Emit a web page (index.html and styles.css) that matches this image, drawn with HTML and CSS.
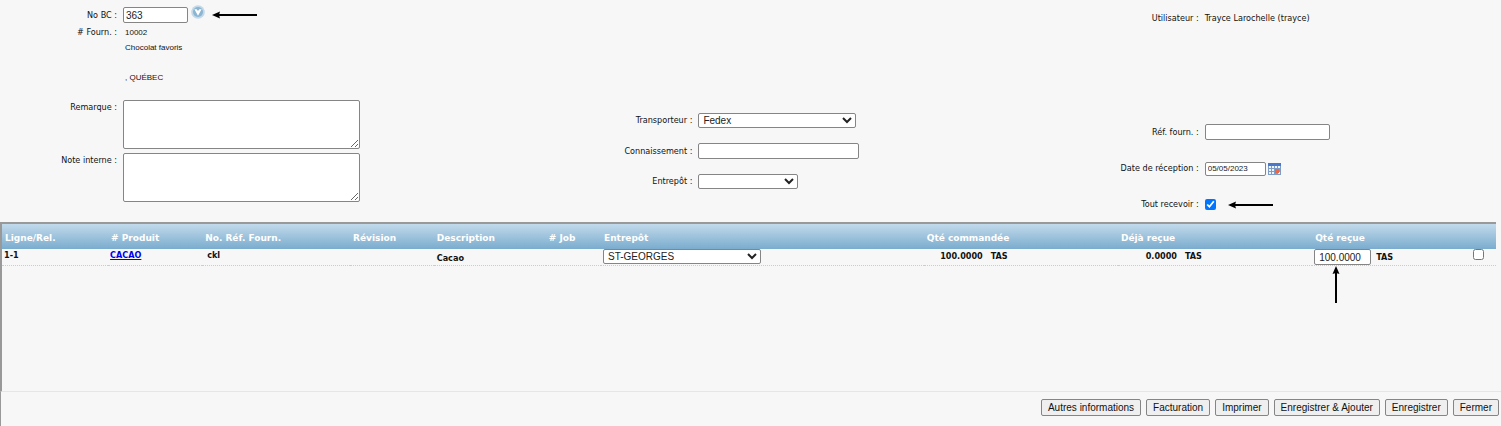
FILE: index.html
```html
<!DOCTYPE html>
<html lang="fr">
<head>
    <meta charset="UTF-8">
    <meta name="viewport" content="width=device-width, initial-scale=1.0">
    <title>Réception</title>
    <link rel="stylesheet" href="styles.css">
</head>
<body>
    <form class="page">
        <div class="entete">
            <div class="groupe groupe-gauche">
                <label for="nobc">No BC :</label>
                <div class="champ">
                    <input type="text" id="nobc" class="w-bc" value="363">
                    <button type="button" class="btn-icone btn-rond" aria-label="Choisir le BC">
                        <svg width="14" height="14" viewBox="0 0 14 14">
                            <circle cx="7" cy="7" r="6.8" fill="#c3d9e8"/>
                            <circle cx="7" cy="7" r="5" fill="#8ab6d3"/>
                            <path d="M3.4 4.2 L5.6 4.2 L7 6 L8.4 4.2 L10.6 4.2 L7 10.8 Z" fill="#fff"/>
                        </svg>
                    </button>
                    <svg class="fleche" width="46" height="8" viewBox="0 0 46 8">
                        <path d="M0 4 L8 0.5 L7 4 L8 7.5 Z"/>
                        <path d="M5 3 H45 V5 H5 Z"/>
                    </svg>
                </div>
                <span class="etiquette"># Fourn. :</span>
                <div class="adresse">
                    <p>10002</p>
                    <p>Chocolat favoris</p>
                    <p></p>
                    <p>, QUÉBEC</p>
                </div>
                <label for="remarque" class="haut">Remarque :</label>
                <textarea id="remarque"></textarea>
                <label for="note" class="haut">Note interne :</label>
                <textarea id="note"></textarea>
            </div>

            <div class="groupe groupe-centre">
                <label for="transporteur">Transporteur :</label>
                <select id="transporteur" class="w-liste"><option>Fedex</option></select>
                <label for="connaissement">Connaissement :</label>
                <input type="text" id="connaissement" class="w-conn">
                <label for="entrepot">Entrepôt :</label>
                <select id="entrepot" class="w-entrepot"><option></option></select>
            </div>

            <div class="groupe groupe-droite">
                <span class="etiquette utilisateur">Utilisateur :</span>
                <span class="utilisateur">Trayce Larochelle (trayce)</span>
                <label for="ref">Réf. fourn. :</label>
                <input type="text" id="ref" class="w-ref">
                <label for="date">Date de réception :</label>
                <div class="champ champ-date">
                    <input type="text" id="date" class="w-date" value="05/05/2023">
                    <button type="button" class="btn-icone" aria-label="Calendrier">
                        <svg width="13" height="12" viewBox="0 0 13 12">
                            <rect width="13" height="12" fill="#7d9cc8"/>
                            <rect width="13" height="3" fill="#4a78c8"/>
                            <path d="M1 3h2v2H1zM4 3h2v2H4zM7 3h2v2H7zM10 3h2v2h-2zM1 6h2v2H1zM4 6h2v2H4zM1 9h2v2H1zM4 9h2v2H4zM10 9h2v2h-2z" fill="#eef4fc"/>
                            <rect x="7" y="6" width="4" height="4" fill="#e8694a"/>
                        </svg>
                    </button>
                </div>
                <label for="tout">Tout recevoir :</label>
                <div class="champ champ-tout">
                    <input type="checkbox" id="tout" checked>
                    <svg class="fleche" width="46" height="8" viewBox="0 0 46 8">
                        <path d="M0 4 L8 0.5 L7 4 L8 7.5 Z"/>
                        <path d="M5 3 H45 V5 H5 Z"/>
                    </svg>
                </div>
            </div>
        </div>

        <div class="liste">
            <table>
                <colgroup>
                    <col class="c-ligne"><col class="c-produit"><col class="c-ref"><col class="c-rev">
                    <col class="c-desc"><col class="c-job"><col class="c-entrepot"><col class="c-qte">
                    <col class="c-qte"><col class="c-recue"><col>
                </colgroup>
                <thead>
                    <tr>
                        <th>Ligne/Rel.</th>
                        <th># Produit</th>
                        <th>No. Réf. Fourn.</th>
                        <th>Révision</th>
                        <th>Description</th>
                        <th># Job</th>
                        <th>Entrepôt</th>
                        <th>Qté commandée</th>
                        <th>Déjà reçue</th>
                        <th>Qté reçue</th>
                        <th></th>
                    </tr>
                </thead>
                <tbody>
                    <tr>
                        <td>1-1</td>
                        <td><a href="#">CACAO</a></td>
                        <td class="ref">ckl</td>
                        <td></td>
                        <td class="desc">Cacao</td>
                        <td></td>
                        <td><select class="w-liste" aria-label="Entrepôt"><option>ST-GEORGES</option></select></td>
                        <td><div class="qte"><span>100.0000</span><span>TAS</span></div></td>
                        <td><div class="qte"><span>0.0000</span><span>TAS</span></div></td>
                        <td>
                            <div class="recue">
                                <input type="text" class="w-qte" value="100.0000" aria-label="Qté reçue">
                                <span>TAS</span>
                                <svg class="fleche fleche-haut" width="8" height="38" viewBox="0 0 8 38">
                                    <path d="M4 0 L7.5 8 L4 7 L0.5 8 Z"/>
                                    <path d="M3 5 V37 H5 V5 Z"/>
                                </svg>
                            </div>
                        </td>
                        <td><input type="checkbox" aria-label="Choisir la ligne"></td>
                    </tr>
                </tbody>
            </table>
        </div>

        <div class="boutons">
            <button type="button">Autres informations</button>
            <button type="button">Facturation</button>
            <button type="button">Imprimer</button>
            <button type="button">Enregistrer &amp; Ajouter</button>
            <button type="button">Enregistrer</button>
            <button type="button">Fermer</button>
        </div>
    </form>
</body>
</html>
```
FILE: styles.css
```css
* { box-sizing: border-box; }
body { margin: 0; background-color: #f7f7f7; color: #111; font-family: "DejaVu Sans Condensed", "DejaVu Sans", sans-serif; font-size: 9px; line-height: 15px; }
p { margin: 0; }

/* champs */
input[type="text"], select, textarea { margin: 0; border: 1px solid #858585; border-radius: 2px; background-color: #fff; color: #222; font-family: "Liberation Sans", Arial, sans-serif; font-size: 10px; }
input[type="text"] { height: 16px; padding: 0 2px; }
select { height: 15px; padding: 0; display: block; }
textarea { width: 237px; height: 49px; display: block; margin-bottom: 4px; }
input[type="checkbox"] { width: 11px; height: 11px; margin: 0; display: block; }
.w-bc { width: 65px; }
.w-liste { width: 158px; }
.w-conn { width: 161px; }
.w-entrepot { width: 100px; }
.w-ref { width: 125px; }
input.w-date { width: 61px; height: 14px; font-size: 8px; }
input.w-qte { width: 57px; padding-left: 4px; }

/* haut de page */
.entete { display: grid; grid-template-columns: 6fr 5fr 4fr; padding-bottom: 10px; }
.groupe { display: grid; column-gap: 6px; justify-items: start; align-content: start; align-items: center; }
.groupe label, .etiquette { justify-self: end; }
.groupe-gauche { grid-template-columns: 117px 1fr; padding-top: 5px; }
.groupe-centre { grid-template-columns: 92px 1fr; padding-top: 113px; row-gap: 15px; }
.groupe-droite { grid-template-columns: 98px 1fr; padding-top: 11px; row-gap: 21px; }
.groupe-gauche .etiquette, .groupe-gauche .haut { align-self: start; }
.utilisateur { padding-bottom: 77px; }
.champ { display: flex; align-items: center; }
.adresse { font-family: "Liberation Sans", Arial, sans-serif; font-size: 8px; padding: 0 0 15px 2px; }
.adresse p { min-height: 15px; }
.btn-icone { border: 0; padding: 0; background: none; display: block; }
.btn-icone svg { display: block; }
.btn-rond { margin: 0 7px 6px 3px; }
.fleche { fill: #000; display: block; }
.champ-date { gap: 2px; }
.champ-tout { gap: 12px; }

/* liste */
.liste { min-height: 170px; padding-right: 5px; border-left: 2px solid #999; border-bottom: 1px solid #e6e6e6; }
table { width: 100%; border-collapse: collapse; table-layout: fixed; border-top: 2px solid #999; font-weight: bold; line-height: 12px; }
thead { background: linear-gradient(#c5dcec, #7aacce); }
th { height: 26px; padding: 2px 0 0 3px; text-align: left; color: #fff; font-family: "DejaVu Sans", sans-serif; }
td { height: 16px; padding: 0 2px; vertical-align: top; border-bottom: 1px dotted #ccc; }
td.ref { padding-left: 5px; }
td.desc { padding: 3px 0 0 3px; }
.c-ligne { width: 7.1%; }
.c-produit { width: 6.3%; }
.c-ref { width: 9.9%; }
.c-rev { width: 5.6%; }
.c-desc { width: 7.5%; }
.c-job { width: 3.7%; }
.c-entrepot { width: 21.6%; }
.c-qte { width: 13%; }
.c-recue { width: 10.6%; }
a { color: #00e; }
.qte { display: grid; grid-template-columns: 57px 1fr; column-gap: 8px; padding-top: 1px; }
.qte span:first-child { text-align: right; }
.recue { display: flex; align-items: center; gap: 5px; position: relative; }
.fleche-haut { position: absolute; left: 18px; top: 17px; }

/* boutons */
.boutons { display: flex; justify-content: flex-end; gap: 5px; padding: 7px 2px 10px; border-left: 1px solid #999; }
.boutons button { height: 17px; padding: 0 6px; border: 1px solid #858585; border-radius: 2px; background-color: #efefef; color: #111; font-family: "Liberation Sans", Arial, sans-serif; font-size: 10px; }
```
